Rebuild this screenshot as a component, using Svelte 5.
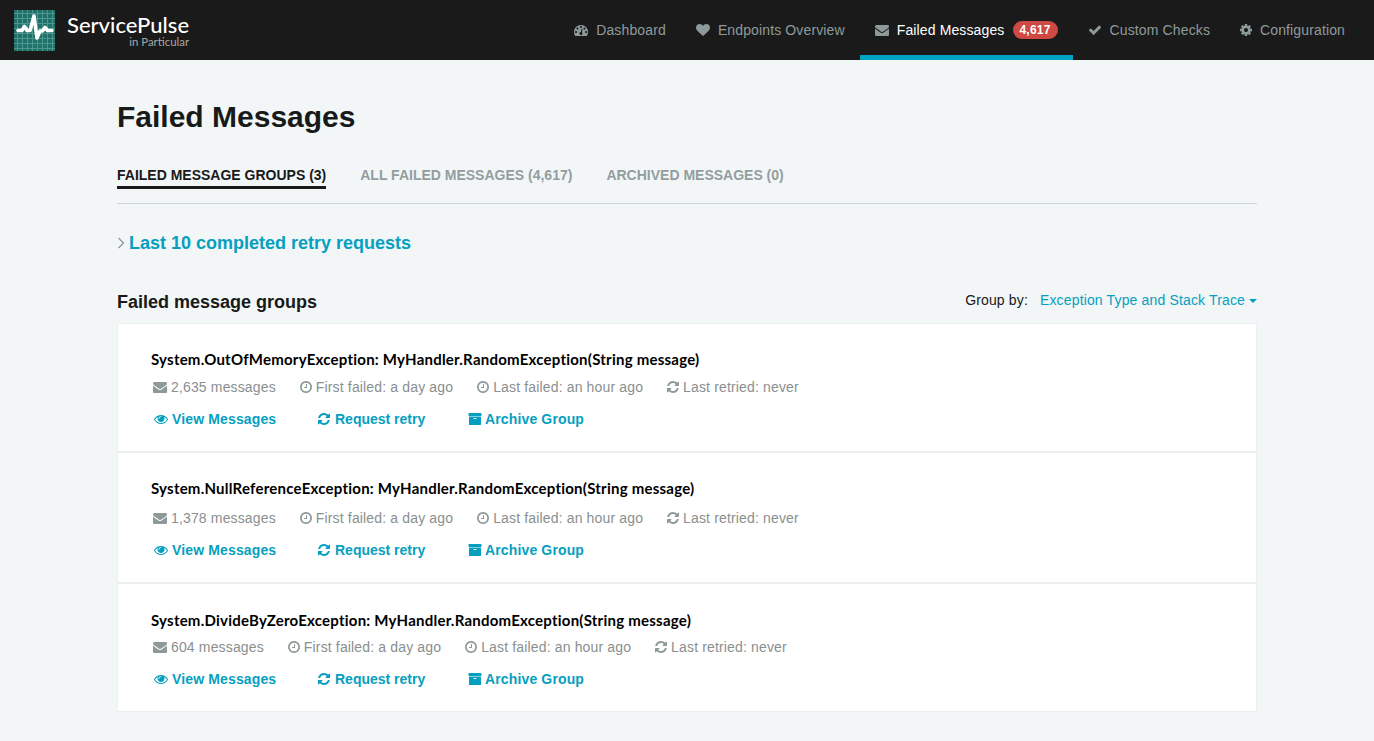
<script>
	const icons = {
		dashboard: 'M384 1152q0-53-37.500-90.500t-90.500-37.500-90.500 37.500-37.500 90.500 37.500 90.500 90.500 37.500 90.500-37.500 37.500-90.500zm192-448q0-53-37.500-90.500t-90.500-37.500-90.500 37.500-37.500 90.500 37.500 90.500 90.500 37.500 90.500-37.500 37.500-90.500zm428 481l101-382q6-26-7.500-48.500t-38.500-29.500-48 6.500-30 39.500l-101 382q-60 5-107 43.500t-63 98.500q-20 77 20 146t117 89 146-20 89-117q16-60-6-117t-72-91zm660-33q0-53-37.500-90.500t-90.500-37.500-90.500 37.500-37.500 90.500 37.500 90.500 90.500 37.500 90.500-37.500 37.500-90.500zm-640-640q0-53-37.500-90.500t-90.500-37.500-90.500 37.500-37.500 90.500 37.500 90.500 90.500 37.500 90.500-37.500 37.500-90.500zm448 192q0-53-37.500-90.500t-90.500-37.500-90.500 37.500-37.500 90.500 37.500 90.500 90.500 37.500 90.500-37.500 37.500-90.500zm320 448q0 261-141 483-19 29-54 29h-1402q-35 0-54-29-141-221-141-483 0-182 71-348t191-286 286-191 348-71 348 71 286 191 191 286 71 348z',
		heart: 'M896 1664q-26 0-44-18l-624-602q-10-8-27.500-26t-55.500-65.500-68-97.500-53.500-121-23.500-138q0-220 127-344t351-124q62 0 126.500 21.500t120 58 95.500 68.500 76 68q36-36 76-68t95.500-68.500 120-58 126.500-21.500q224 0 351 124t127 344q0 221-229 450l-623 600q-18 18-44 18z',
		envelope: 'M1792 710v794q0 66-47 113t-113 47h-1472q-66 0-113-47t-47-113v-794q44 49 101 87 362 246 497 345 57 42 92.500 65.500t94.500 48 110 24.500h2q51 0 110-24.500t94.500-48 92.500-65.500q170-123 498-345 57-39 100-87zm0-294q0 79-49 151t-122 123q-376 261-468 325-10 7-42.500 30.500t-54 38-52 32.500-57.500 27-50 9h-2q-23 0-50-9t-57.500-27-52-32.500-54-38-42.500-30.500q-91-64-262-182.500t-205-142.500q-62-42-117-115.500t-55-136.500q0-78 41.500-130t118.500-52h1472q65 0 112.500 47t47.500 113z',
		check: 'M1671 566q0 40-28 68l-724 724-136 136q-28 28-68 28t-68-28l-136-136-362-362q-28-28-28-68t28-68l136-136q28-28 68-28t68 28l294 295 656-657q28-28 68-28t68 28l136 136q28 28 28 68z',
		cog: 'M1152 896q0-106-75-181t-181-75-181 75-75 181 75 181 181 75 181-75 75-181zm512-109v222q0 12-8 23t-20 13l-185 28q-19 54-39 91 35 50 107 138 10 12 10 25t-9 23q-27 37-99 108t-94 71q-12 0-26-9l-138-108q-44 23-91 38-16 136-29 186-7 28-36 28h-222q-14 0-24.500-8.500t-11.500-21.500l-28-184q-49-16-90-37l-141 107q-10 9-25 9-14 0-25-11-126-114-165-168-7-10-7-23 0-12 8-23 15-21 51-66.500t54-70.500q-27-50-41-99l-183-27q-13-2-21-12.500t-8-23.500v-222q0-12 8-23t19-13l186-28q14-46 39-92-40-57-107-138-10-12-10-24 0-10 9-23 26-36 98.500-107.500t94.500-71.500q13 0 26 10l138 107q44-23 91-38 16-136 29-186 7-28 36-28h222q14 0 24.500 8.500t11.500 21.500l28 184q49 16 90 37l142-107q9-9 24-9 13 0 25 10 129 119 165 170 7 8 7 22 0 12-8 23-15 21-51 66.500t-54 70.500q26 50 41 98l183 28q13 2 21 12.500t8 23.500z',
		clock: 'M1024 544v448q0 14-9 23t-23 9h-320q-14 0-23-9t-9-23v-64q0-14 9-23t23-9h224v-352q0-14 9-23t23-9h64q14 0 23 9t9 23zm416 352q0-148-73-273t-198-198-273-73-273 73-198 198-73 273 73 273 198 198 273 73 273-73 198-198 73-273zm224 0q0 209-103 385.500t-279.500 279.500-385.500 103-385.500-103-279.500-279.500-103-385.500 103-385.500 279.500-279.500 385.500-103 385.500 103 279.500 279.500 103 385.500z',
		refresh: 'M1639 1056q0 5-1 7-64 268-268 434.500t-478 166.500q-146 0-282.500-55t-243.500-157l-129 129q-19 19-45 19t-45-19-19-45v-448q0-26 19-45t45-19h448q26 0 45 19t19 45-19 45l-137 137q71 66 161 102t187 36q134 0 250-65t186-179q11-17 53-117 8-23 30-23h192q13 0 22.500 9.500t9.500 22.500zm25-800v448q0 26-19 45t-45 19h-448q-26 0-45-19t-19-45 19-45l138-138q-148-137-349-137-134 0-250 65t-186 179q-11 17-53 117-8 23-30 23h-199q-13 0-22.500-9.500t-9.500-22.500v-7q65-268 270-434.500t480-166.500q146 0 284 55.500t245 156.500l130-129q19-19 45-19t45 19 19 45z',
		eye: 'M1664 960q-152-236-381-353 61 104 61 225 0 185-131.500 316.500t-316.500 131.500-316.500-131.500-131.500-316.500q0-121 61-225-229 117-381 353 133 205 333.500 326.500t434.500 121.500 434.500-121.500 333.500-326.500zm-720-384q0-20-14-34t-34-14q-125 0-214.500 89.500t-89.500 214.500q0 20 14 34t34 14 34-14 14-34q0-86 61-147t147-61q20 0 34-14t14-34zm848 384q0 34-20 69-140 230-376.500 368.500t-499.500 138.500-499.500-139-376.500-368q-20-35-20-69t20-69q140-229 376.500-368t499.500-139 499.500 139 376.500 368q20 35 20 69z',
		archive: 'M1088 832q0-26-19-45t-45-19h-256q-26 0-45 19t-19 45 19 45 45 19h256q26 0 45-19t19-45zm576-192v960q0 26-19 45t-45 19h-1408q-26 0-45-19t-19-45v-960q0-26 19-45t45-19h1408q26 0 45 19t19 45zm64-448v256q0 26-19 45t-45 19h-1536q-26 0-45-19t-19-45v-256q0-26 19-45t45-19h1536q26 0 45 19t19 45z'
	};

	// these glyphs are narrower than the full 1792 em box
	const narrow = ['cog', 'clock', 'refresh'];

	const navItems = [
		{ label: 'Dashboard', icon: 'dashboard' },
		{ label: 'Endpoints Overview', icon: 'heart' },
		{ label: 'Failed Messages', icon: 'envelope', active: true, badge: '4,617' },
		{ label: 'Custom Checks', icon: 'check' },
		{ label: 'Configuration', icon: 'cog' }
	];

	const tabs = [
		{ label: 'Failed Message Groups (3)', active: true },
		{ label: 'All Failed Messages (4,617)' },
		{ label: 'Archived Messages (0)' }
	];

	const groups = [
		{ title: 'System.OutOfMemoryException: MyHandler.RandomException(String message)', count: '2,635 messages', cls: 'first' },
		{ title: 'System.NullReferenceException: MyHandler.RandomException(String message)', count: '1,378 messages', cls: 'second' },
		{ title: 'System.DivideByZeroException: MyHandler.RandomException(String message)', count: '604 messages', cls: 'third' }
	];
</script>

{#snippet fa(name)}
	{#if narrow.includes(name)}
		<svg class="fa narrow" viewBox="128 0 1536 1792" aria-hidden="true"><path fill="currentColor" d={icons[name]} /></svg>
	{:else}
		<svg class="fa" viewBox="0 0 1792 1792" aria-hidden="true"><path fill="currentColor" d={icons[name]} /></svg>
	{/if}
{/snippet}

<header class="navbar">
	<div class="brand">
		<svg class="logo" viewBox="0 0 41 41" aria-hidden="true">
			<rect width="41" height="41" fill="#22706a" />
			<path d="M3.500 0V41M8.500 0V41M13.500 0V41M18.500 0V41M23.500 0V41M28.500 0V41M33.500 0V41M38.500 0V41M0 3.500H41M0 8.500H41M0 13.500H41M0 18.500H41M0 23.500H41M0 28.500H41M0 33.500H41M0 38.500H41" stroke="#4c978f" stroke-width="1" fill="none" />
			<path d="M4 20.500H8L10.500 16.500L13 20.500H16L20 6L23 28L26 21H28.500L31 17.500L33.500 20.500H38" stroke="#fff" stroke-width="3.600" stroke-linejoin="round" stroke-linecap="round" fill="none" />
		</svg>
		<div class="wordmark">
			<span class="product">ServicePulse</span>
			<span class="vendor">in Particular</span>
		</div>
	</div>
	<nav class="menu">
		{#each navItems as item}
			<a href="#top" class="menu-item" class:active={item.active}>
				<span class="nav-icon">{@render fa(item.icon)}</span>
				<span>{item.label}</span>
				{#if item.badge}<span class="badge">{item.badge}</span>{/if}
			</a>
		{/each}
	</nav>
</header>

<main class="page">
	<h1>Failed Messages</h1>

	<div class="tabs">
		{#each tabs as tab}
			<a href="#top" class="tab" class:active={tab.active}>{tab.label}</a>
		{/each}
	</div>

	<h2 class="history">
		<svg class="chevron" viewBox="0 0 8 12" aria-hidden="true"><path d="M1.500 1L6.500 6L1.500 11" fill="none" stroke="#8d9a9a" stroke-width="1.300" /></svg>
		<a href="#top">Last 10 completed retry requests</a>
	</h2>

	<div class="groups-head">
		<h3>Failed message groups</h3>
		<div class="group-by">
			<span>Group by:</span>
			<a href="#top">Exception Type and Stack Trace<i class="caret"></i></a>
		</div>
	</div>

	<div class="groups">
		{#each groups as group}
			<section class="group {group.cls}">
				<h4>{group.title}</h4>
				<div class="meta">
					<span class="stat">{@render fa('envelope')}{group.count}</span>
					<span class="stat">{@render fa('clock')}First failed: a day ago</span>
					<span class="stat">{@render fa('clock')}Last failed: an hour ago</span>
					<span class="stat">{@render fa('refresh')}Last retried: never</span>
				</div>
				<div class="actions">
					<a href="#top" class="view">{@render fa('eye')}View Messages</a>
					<a href="#top" class="retry">{@render fa('refresh')}Request retry</a>
					<a href="#top" class="archive">{@render fa('archive')}Archive Group</a>
				</div>
			</section>
		{/each}
	</div>
</main>

<style>
	:global(body) {
		background: #f2f6f7;
		font-family: "Liberation Sans", Arial, sans-serif;
		color: #181919;
	}

	a {
		text-decoration: none;
		color: #069fc0;
	}

	.fa {
		width: 14px;
		height: 14px;
		flex: none;
		display: block;
	}

	.fa.narrow {
		width: 12px;
	}

	.navbar {
		height: 60px;
		background: #1a1a1a;
		display: flex;
		justify-content: space-between;
	}

	.brand {
		display: flex;
		align-items: center;
		padding-left: 14px;
		gap: 12px;
	}

	.logo {
		width: 41px;
		height: 41px;
	}

	.wordmark {
		display: flex;
		flex-direction: column;
		align-items: flex-end;
		font-family: Lato, sans-serif;
		color: #fff;
		margin-top: 2px;
	}

	.product {
		font-size: 22px;
		line-height: 22px;
		font-weight: 500;
	}

	.vendor {
		font-size: 11.400px;
		line-height: 12px;
		color: #a8a8a8;
	}

	.menu {
		display: flex;
		padding-right: 14px;
	}

	.menu-item {
		display: flex;
		align-items: center;
		padding: 5px 15px 0;
		font-size: 14px;
		letter-spacing: 0.13px;
		color: #8e9a9a;
		box-sizing: border-box;
		border-bottom: 5px solid transparent;
	}

	.menu-item.active {
		color: #fff;
		border-bottom-color: #00a3c4;
	}

	.nav-icon {
		margin-right: 8px;
		color: #8e9a9a;
	}

	.badge {
		margin-left: 8px;
		background: #ce4844;
		color: #fff;
		font-size: 12px;
		font-weight: bold;
		letter-spacing: 0.2px;
		line-height: 12px;
		padding: 3px 7px;
		border-radius: 10px;
	}

	.page {
		width: 1140px;
		margin: 0 auto;
	}

	h1 {
		font-size: 30px;
		line-height: 33px;
		font-weight: bold;
		margin: 40px 0 0;
	}

	.tabs {
		display: flex;
		gap: 34px;
		margin-top: 31px;
		height: 39px;
		border-bottom: 1px solid #ced6d6;
	}

	.tab {
		font-size: 14px;
		font-weight: bold;
		text-transform: uppercase;
		color: #929e9e;
		height: 25px;
		line-height: 22px;
		box-sizing: border-box;
	}

	.tab.active {
		color: #181919;
		border-bottom: 3px solid #181919;
	}

	.history {
		display: flex;
		align-items: center;
		gap: 4px;
		font-size: 18px;
		line-height: 20px;
		font-weight: bold;
		margin: 29px 0 0;
	}

	.chevron {
		width: 8px;
		height: 12px;
	}

	.groups-head {
		display: flex;
		justify-content: space-between;
		align-items: flex-start;
		margin-top: 37px;
		height: 33px;
	}

	h3 {
		font-size: 18px;
		line-height: 20px;
		font-weight: bold;
		margin: 2px 0 0;
	}

	.group-by {
		font-size: 14px;
		display: flex;
		gap: 12px;
		margin-top: 2px;
		letter-spacing: 0.15px;
	}

	.caret {
		display: inline-block;
		margin-left: 4px;
		vertical-align: middle;
		border-top: 4px solid #069fc0;
		border-left: 4px solid transparent;
		border-right: 4px solid transparent;
	}

	.group {
		background: #fff;
		border: 1px solid #eceff0;
		padding: 0 33px;
		box-sizing: border-box;
		height: 129px;
	}

	.group.second {
		height: 131px;
	}

	h4 {
		font-family: Lato, sans-serif;
		font-size: 15px;
		letter-spacing: 0.23px;
		line-height: 20px;
		font-weight: bold;
		color: #000;
		margin: 25px 0 0;
	}

	.group.third h4 {
		margin-top: 26px;
	}

	.meta {
		display: flex;
		gap: 24px;
		margin-top: 8px;
		margin-left: 2px;
		font-size: 14px;
		letter-spacing: 0.15px;
		line-height: 20px;
		color: #8a8f8f;
	}

	.group.second .meta {
		margin-top: 10px;
	}

	.group.third .meta {
		margin-top: 7px;
	}

	.stat {
		display: flex;
		align-items: center;
		gap: 4px;
	}

	.stat .fa {
		color: #8e9a9a;
	}

	.actions {
		display: flex;
		margin-top: 12px;
		margin-left: 3px;
		font-size: 14px;
		letter-spacing: 0.14px;
		line-height: 20px;
		font-weight: bold;
	}

	.actions a {
		display: flex;
		align-items: center;
		gap: 4px;
	}

	.actions .archive {
		gap: 3px;
	}

	.view {
		width: 164px;
	}

	.actions .retry {
		width: 150px;
		gap: 5px;
		letter-spacing: 0;
	}
</style>
